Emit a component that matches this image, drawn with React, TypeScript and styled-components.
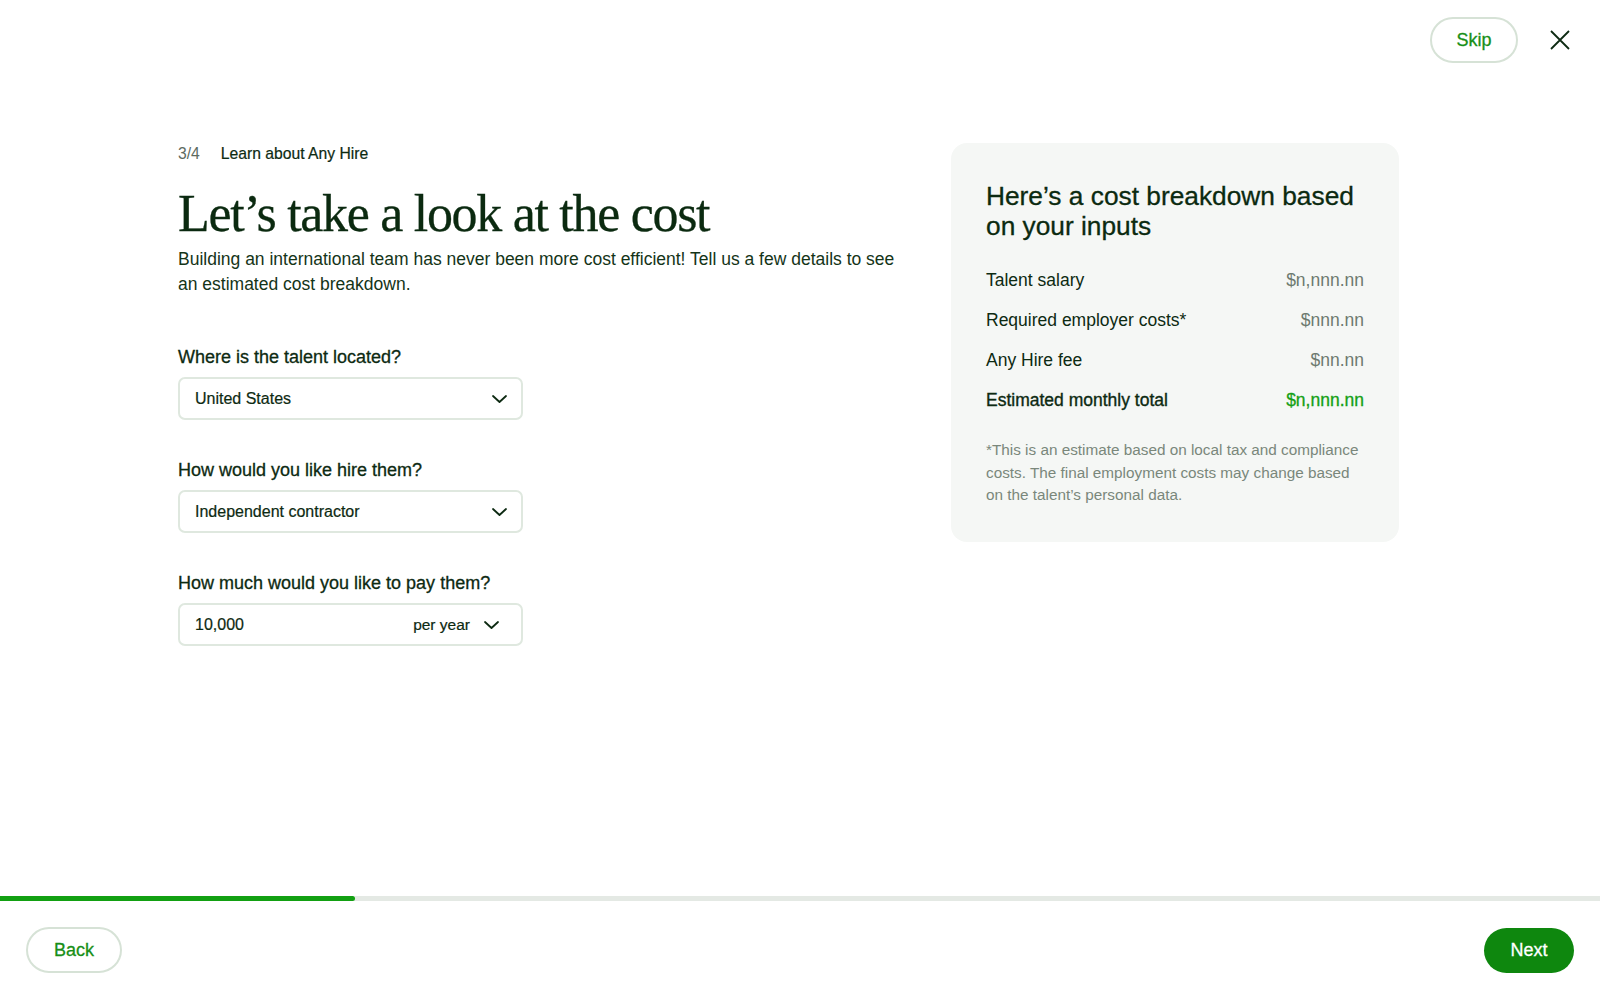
import styled, { createGlobalStyle } from 'styled-components';

const GlobalStyle = createGlobalStyle`
  * { box-sizing: border-box; }
  body {
    margin: 0;
    background: #ffffff;
    font-family: 'Liberation Sans', Arial, sans-serif;
    color: #0d2a12;
  }
`;

type Field = {
  label: string;
  value: string;
  unit?: string;
};

const fields: Field[] = [
  { label: 'Where is the talent located?', value: 'United States' },
  { label: 'How would you like hire them?', value: 'Independent contractor' },
  { label: 'How much would you like to pay them?', value: '10,000', unit: 'per year' },
];

const costs = [
  { name: 'Talent salary', amount: '$n,nnn.nn' },
  { name: 'Required employer costs*', amount: '$nnn.nn' },
  { name: 'Any Hire fee', amount: '$nn.nn' },
];

const Chevron = () => (
  <svg width='15' height='8' viewBox='0 0 15 8' fill='none'>
    <polyline
      points='1,1 7.5,7 14,1'
      stroke='#0d2a12'
      strokeWidth='1.8'
      strokeLinecap='round'
      strokeLinejoin='round'
    />
  </svg>
);

const CloseIcon = () => (
  <svg width='20' height='20' viewBox='0 0 20 20' fill='none'>
    <path d='M1 1L19 19M19 1L1 19' stroke='#0d2a12' strokeWidth='1.8' />
  </svg>
);

export default function App() {
  const progress = 22.2;

  return (
    <Page>
      <GlobalStyle />
      <TopBar>
        <OutlineButton type='button'>Skip</OutlineButton>
        <CloseButton type='button' aria-label='close'>
          <CloseIcon />
        </CloseButton>
      </TopBar>

      <Main>
        <FormColumn>
          <StepRow>
            <StepCount>3/4</StepCount>
            <StepName>Learn about Any Hire</StepName>
          </StepRow>
          <Heading>Let’s take a look at the cost</Heading>
          <Intro>
            Building an international team has never been more cost efficient! Tell us a few
            details to see an estimated cost breakdown.
          </Intro>

          <Fields>
            {fields.map((f) => (
              <FieldGroup key={f.label}>
                <Label>{f.label}</Label>
                <SelectBox $hasUnit={!!f.unit}>
                  <span>{f.value}</span>
                  <SelectEnd>
                    {f.unit && <Unit>{f.unit}</Unit>}
                    <Chevron />
                  </SelectEnd>
                </SelectBox>
              </FieldGroup>
            ))}
          </Fields>
        </FormColumn>

        <Card>
          <CardTitle>Here’s a cost breakdown based on your inputs</CardTitle>
          <CostList>
            {costs.map((c) => (
              <CostRow key={c.name}>
                <span>{c.name}</span>
                <Amount>{c.amount}</Amount>
              </CostRow>
            ))}
            <CostRow $total>
              <span>Estimated monthly total</span>
              <Amount $total>$n,nnn.nn</Amount>
            </CostRow>
          </CostList>
          <Footnote>
            *This is an estimate based on local tax and compliance costs. The final employment
            costs may change based on the talent’s personal data.
          </Footnote>
        </Card>
      </Main>

      <Track>
        <Fill style={{ width: `${progress}%` }} />
      </Track>
      <Footer>
        <OutlineButton type='button' $wide>
          Back
        </OutlineButton>
        <PrimaryButton type='button'>Next</PrimaryButton>
      </Footer>
    </Page>
  );
}

const Page = styled.div`
  display: flex;
  flex-direction: column;
  height: 100vh;
`;

const TopBar = styled.div`
  display: flex;
  justify-content: flex-end;
  align-items: center;
  gap: 32px;
  padding: 17px 30px 0;
`;

const OutlineButton = styled.button<{ $wide?: boolean }>`
  height: 46px;
  width: ${(p) => (p.$wide ? '96px' : '88px')};
  border: 2px solid #d6e2d6;
  border-radius: 23px;
  background: #fff;
  color: #178f17;
  font-family: 'Liberation Sans', Arial, sans-serif;
  font-size: 18px;
  -webkit-text-stroke: 0.3px #178f17;
  cursor: pointer;
`;

const CloseButton = styled.button`
  display: flex;
  padding: 0;
  border: none;
  background: transparent;
  cursor: pointer;
`;

const Main = styled.main`
  flex: 1;
  display: grid;
  grid-template-columns: 730px 448px;
  column-gap: 43px;
  align-items: start;
  padding: 80px 0 0 178px;
`;

const FormColumn = styled.section`
  display: flex;
  flex-direction: column;
`;

const StepRow = styled.div`
  display: flex;
  gap: 21px;
  font-size: 15.7px;
  line-height: 22px;
`;

const StepCount = styled.span`
  color: #5d6b5f;
`;

const StepName = styled.span`
  color: #0d2a12;
  -webkit-text-stroke: 0.2px #0d2a12;
`;

const Heading = styled.h1`
  margin: 19px 0 0;
  font-family: 'Liberation Serif', 'Times New Roman', serif;
  font-weight: 400;
  font-size: 52px;
  line-height: 60px;
  letter-spacing: -1.3px;
  color: #0b2a10;
  -webkit-text-stroke: 0.3px #0b2a10;
`;

const Intro = styled.p`
  margin: 3px 0 0;
  max-width: 724px;
  font-size: 17.5px;
  line-height: 25px;
  color: #143418;
`;

const Fields = styled.div`
  display: flex;
  flex-direction: column;
  gap: 39px;
  margin-top: 49px;
`;

const FieldGroup = styled.div`
  display: flex;
  flex-direction: column;
  gap: 9px;
`;

const Label = styled.label`
  font-size: 18px;
  line-height: 22px;
  color: #0d2a12;
  -webkit-text-stroke: 0.3px #0d2a12;
`;

const SelectBox = styled.div<{ $hasUnit: boolean }>`
  width: 345px;
  height: 43px;
  display: flex;
  align-items: center;
  justify-content: space-between;
  padding: 0 ${(p) => (p.$hasUnit ? '22px' : '14px')} 0 15px;
  border: 2px solid #dfe8df;
  border-radius: 7px;
  font-size: 16px;
  color: #0d2a12;
  -webkit-text-stroke: 0.2px #0d2a12;
`;

const SelectEnd = styled.div`
  display: flex;
  align-items: center;
  gap: 14px;
`;

const Unit = styled.span`
  font-size: 15.5px;
`;

const Card = styled.aside`
  background: #f5f7f5;
  border-radius: 16px;
  padding: 38px 35px 35px;
`;

const CardTitle = styled.h2`
  margin: 0;
  font-weight: 400;
  font-size: 26.3px;
  line-height: 30px;
  color: #0b2a10;
  -webkit-text-stroke: 0.3px #0b2a10;
`;

const CostList = styled.div`
  display: flex;
  flex-direction: column;
  gap: 16px;
  margin-top: 27px;
`;

const CostRow = styled.div<{ $total?: boolean }>`
  display: flex;
  justify-content: space-between;
  font-size: 17.5px;
  line-height: 24px;
  color: #0d2a12;
  -webkit-text-stroke: ${(p) => (p.$total ? '0.35px #0d2a12' : '0')};
`;

const Amount = styled.span<{ $total?: boolean }>`
  color: ${(p) => (p.$total ? '#14a014' : '#6d7a6f')};
  -webkit-text-stroke: ${(p) => (p.$total ? '0.3px #14a014' : '0')};
`;

const Footnote = styled.p`
  margin: 27px 0 0;
  font-size: 15.3px;
  line-height: 22.5px;
  color: #7a877b;
`;

const Track = styled.div`
  height: 5px;
  background: #e4e9e4;
`;

const Fill = styled.div`
  height: 100%;
  background: #12a012;
  border-radius: 0 3px 3px 0;
`;

const Footer = styled.footer`
  display: flex;
  justify-content: space-between;
  align-items: center;
  padding: 26px 26px 27px;
`;

const PrimaryButton = styled.button`
  height: 45px;
  width: 90px;
  border: none;
  border-radius: 23px;
  background: #0e870e;
  color: #fff;
  font-family: 'Liberation Sans', Arial, sans-serif;
  font-size: 18px;
  -webkit-text-stroke: 0.3px #fff;
  cursor: pointer;
`;
